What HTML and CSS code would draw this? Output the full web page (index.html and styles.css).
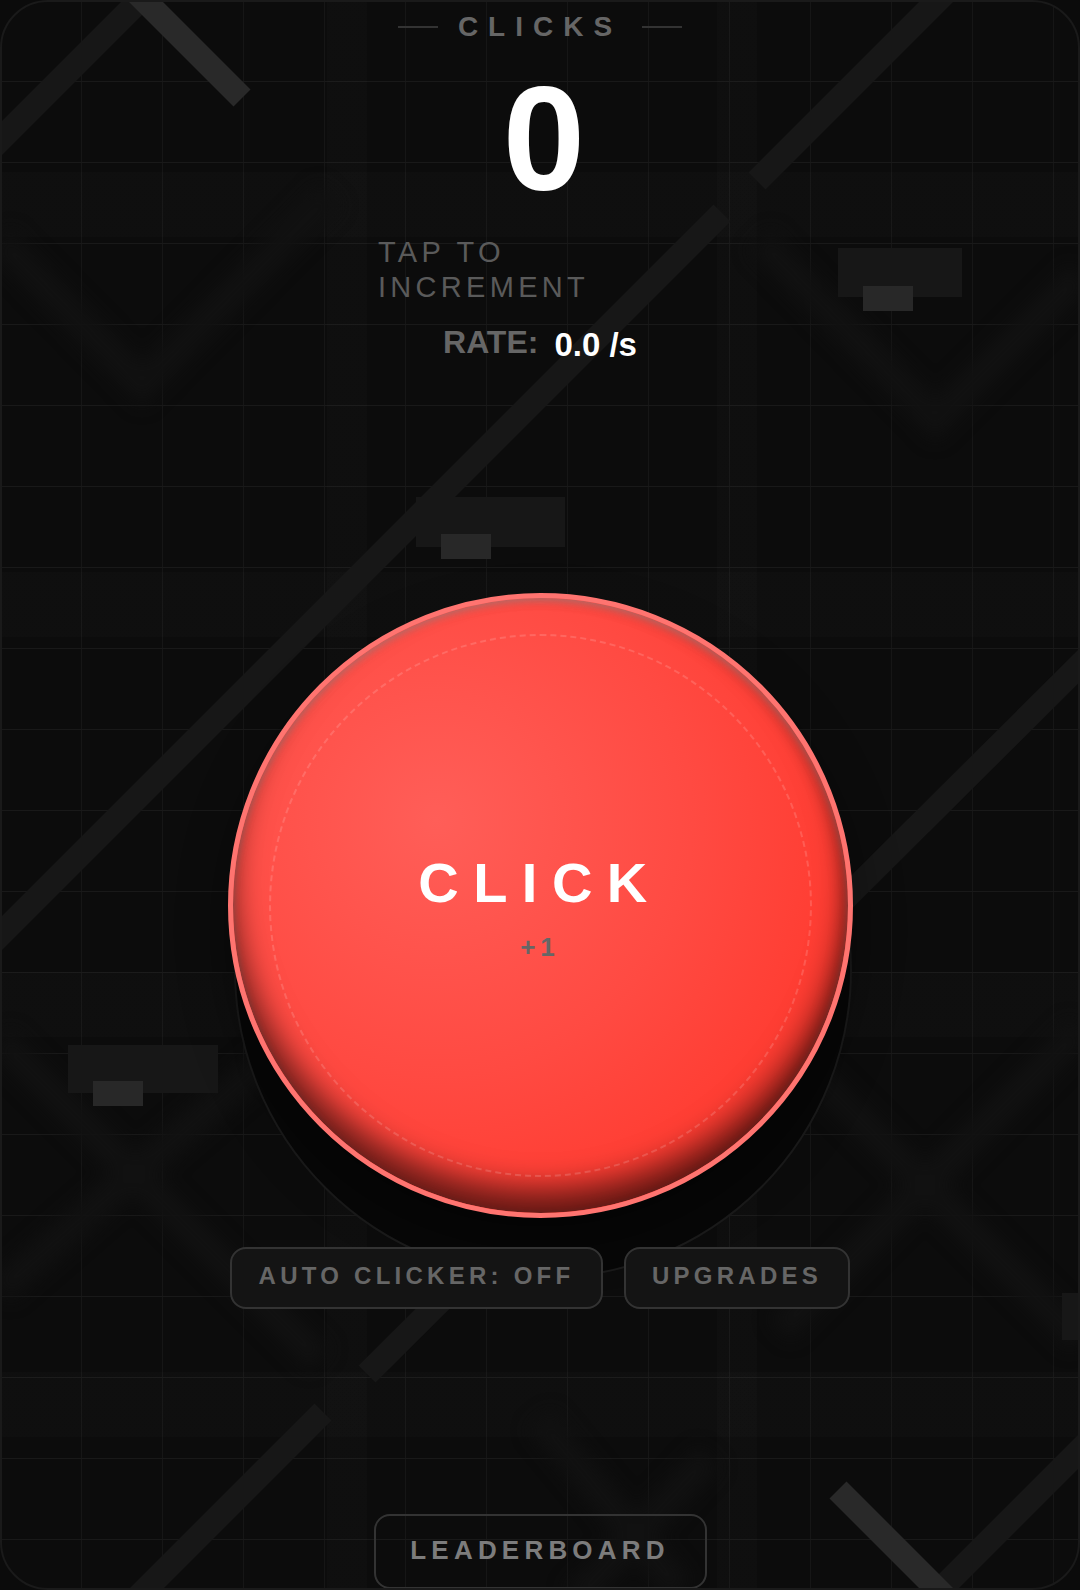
FILE: index.html
```html
<!DOCTYPE html>
<html lang="en">
<head>
<meta charset="utf-8">
<title>Clicks</title>
<link rel="stylesheet" href="styles.css">
</head>
<body>
<main class="app">
  <div class="bg-bands"></div>
  <svg class="bg-shapes" viewBox="0 0 1080 1590" aria-hidden="true">
    <g class="faint">
      <path d="M0 240 L142 385 L330 195"/>
      <path d="M760 240 L935 420 L1080 275"/>
      <path d="M0 1040 L320 1360"/>
      <path d="M0 1290 L150 1160 L290 1040"/>
      <path d="M780 1040 L1080 1340"/>
      <path d="M780 1330 L1080 1030"/>
      <path d="M540 1420 L680 1590"/>
      <path d="M709 1457 L575 1600"/>
    </g>
    <g class="dim">
      <path d="M-10 150 L150 -10"/>
      <path d="M757 181 L945 -7"/>
      <path d="M722 213 L-20 955"/>
      <path d="M367 1374 L1100 645"/>
      <path d="M323 1412 L130 1605"/>
      <path d="M1100 1430 L930 1600"/>
    </g>
    <g class="bright">
      <path d="M242 98 L135 -9"/>
      <path d="M838 1490 L945 1597"/>
    </g>
    <rect class="block" x="838" y="248" width="124" height="49"/>
    <rect class="chip" x="863" y="286" width="50" height="25"/>
    <rect class="block" x="416" y="497" width="149" height="50"/>
    <rect class="chip" x="441" y="534" width="50" height="25"/>
    <rect class="block" x="68" y="1045" width="150" height="48"/>
    <rect class="chip" x="93" y="1081" width="50" height="25"/>
    <rect class="block" x="1062" y="1293" width="18" height="47"/>
  </svg>

  <header class="stats">
    <div class="title"><span class="rule"></span><span class="title-text">CLICKS</span><span class="rule"></span></div>
    <div class="count">0</div>
    <p class="hint">TAP TO INCREMENT</p>
    <div class="rate"><span class="rate-label">RATE:</span><span class="rate-value">0.0 /s</span></div>
  </header>

  <div class="dial">
    <button class="big" type="button">
      <span class="big-label">CLICK</span>
      <span class="big-sub">+1</span>
    </button>
  </div>

  <div class="actions">
    <button class="pill auto" type="button">AUTO CLICKER: OFF</button>
    <button class="pill upgrades" type="button">UPGRADES</button>
  </div>

  <button class="pill board" type="button">LEADERBOARD</button>
</main>
</body>
</html>
```

FILE: styles.css
```css
* { box-sizing: border-box; }

html, body {
  margin: 0;
  padding: 0;
  background: #0b0b0b;
}

body {
  font-family: "Liberation Sans", Arial, sans-serif;
}

.app {
  position: relative;
  width: 1080px;
  height: 1590px;
  overflow: hidden;
  display: flex;
  flex-direction: column;
  align-items: center;
  padding-top: 9px;
  border: 2px solid #1a1a1a;
  border-radius: 48px;
  background-color: #0c0c0c;
  background-image:
    linear-gradient(#191919 1.5px, transparent 1.5px),
    linear-gradient(90deg, #161616 1.5px, transparent 1.5px);
  background-size: 81px 81px;
  background-position: -2px -2px;
}

.bg-bands {
  position: absolute;
  inset: 0;
  background-image:
    repeating-linear-gradient(180deg, transparent 0 170px, rgba(255,255,255,.01) 170px 235px, transparent 235px 400px),
    repeating-linear-gradient(90deg, transparent 0 325px, rgba(255,255,255,.01) 325px 365px, transparent 365px 715px, rgba(255,255,255,.01) 715px 755px, transparent 755px 1080px);
}

.bg-shapes {
  position: absolute;
  left: -2px;
  top: -2px;
  width: 1080px;
  height: 1590px;
}

.bg-shapes path { fill: none; stroke-width: 24; }
.faint { filter: blur(9px); }
.faint path { stroke: #111111; stroke-width: 30; }
.dim path { stroke: #171717; }
.bright path { stroke: #292929; }
.block { fill: #171717; }
.chip { fill: #282828; }

.stats {
  position: relative;
  display: flex;
  flex-direction: column;
  align-items: center;
  width: 100%;
}

.title {
  display: flex;
  align-items: center;
  gap: 20px;
  height: 32px;
  color: #666666;
  font-size: 28px;
  font-weight: 700;
  letter-spacing: 10px;
}

.rule {
  width: 40px;
  height: 2px;
  background: #333333;
}

.count {
  margin: 22px 0 0 8px;
  color: #ffffff;
  font-size: 148px;
  font-weight: 700;
  line-height: 1;
}

.hint {
  width: 324px;
  margin: 22px 0 0;
  color: #5a5a5a;
  font-size: 29px;
  line-height: 35px;
  letter-spacing: 4.3px;
}

.rate {
  display: flex;
  align-items: flex-start;
  gap: 16px;
  margin-top: 21px;
  font-weight: 700;
}

.rate-label {
  margin-top: -2px;
  color: #666666;
  font-size: 32px;
}

.rate-value {
  color: #ffffff;
  font-size: 33px;
}

.dial {
  position: relative;
  width: 625px;
  height: 625px;
  margin-top: 229px;
}

.dial::before {
  content: "";
  position: absolute;
  left: 6px;
  top: 68px;
  width: 614px;
  height: 614px;
  border-radius: 50%;
  border: 2px solid #1b1b1b;
  background: #070707;
}

.big {
  position: relative;
  display: flex;
  flex-direction: column;
  align-items: center;
  justify-content: center;
  width: 625px;
  height: 625px;
  padding: 2px 0 0;
  font-family: inherit;
  border: 5px solid #ff7470;
  border-radius: 50%;
  background: radial-gradient(circle at 33% 36%, #ff5e58 0%, #ff4a42 45%, #ff3b30 75%);
  box-shadow:
    inset 0 -24px 30px rgba(0, 0, 0, .58),
    inset 0 3px 7px rgba(150, 150, 150, .5),
    inset -6px 0 14px rgba(0, 0, 0, .16),
    0 24px 50px rgba(0, 0, 0, .4);
}

.big::before {
  content: "";
  position: absolute;
  inset: 36px;
  border-radius: 50%;
  border: 2px dashed rgba(255, 255, 255, .15);
}

.big-label {
  color: #ffffff;
  font-size: 56px;
  font-weight: 700;
  letter-spacing: 14.5px;
}

.big-sub {
  margin-top: 17px;
  color: #666666;
  font-size: 26px;
  font-weight: 700;
  letter-spacing: 5px;
}

.actions {
  position: relative;
  display: flex;
  gap: 21px;
  margin-top: 29px;
}

.pill {
  position: relative;
  height: 62px;
  padding: 0 26px 4px;
  font-family: inherit;
  font-size: 24px;
  font-weight: 700;
  letter-spacing: 4.25px;
  color: #666666;
  background: #141414;
  border: 2px solid #333333;
  border-radius: 16px;
}

.auto { width: 373px; }
.upgrades { width: 226px; }

.board {
  width: 333px;
  height: 75px;
  margin-top: auto;
  margin-bottom: -1px;
  padding-bottom: 2px;
  font-size: 26px;
  letter-spacing: 5.2px;
  color: #7c7c7c;
  background: transparent;
}
```
